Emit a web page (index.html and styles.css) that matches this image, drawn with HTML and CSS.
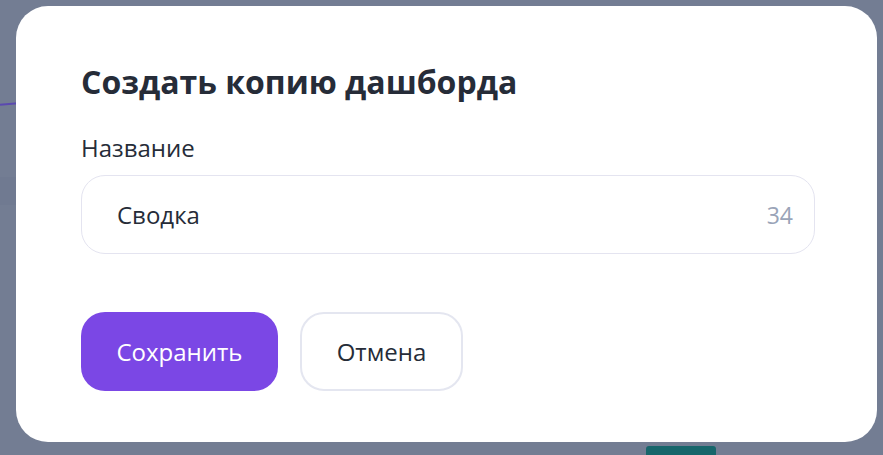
FILE: index.html
```html
<!DOCTYPE html>
<html lang="ru">
<head>
<meta charset="utf-8">
<link rel="stylesheet" href="styles.css">
</head>
<body>
<div class="backdrop">
  <div class="bg-line"></div>
  <div class="bg-band"></div>
  <div class="bg-tab"></div>
  <div class="modal">
    <h1 class="title">Создать копию дашборда</h1>
    <label class="label">Название</label>
    <div class="field">
      <span class="value">Сводка</span>
      <span class="counter">34</span>
    </div>
    <div class="actions">
      <button class="btn btn-primary">Сохранить</button>
      <button class="btn btn-secondary">Отмена</button>
    </div>
  </div>
</div>
</body>
</html>
```
FILE: styles.css
```css
html, body {
  margin: 0;
  padding: 0;
}
body {
  background: #737d93;
  font-family: "Open Sans", "Noto Sans", sans-serif;
  width: 883px;
  height: 455px;
  overflow: hidden;
}
.backdrop {
  position: relative;
  width: 883px;
  height: 455px;
  padding: 6px 0 0 16px;
  box-sizing: border-box;
}
.bg-line {
  position: absolute;
  left: 0;
  top: 103px;
  width: 18px;
  height: 2px;
  background: #5b49b0;
  transform: rotate(-4deg);
}
.bg-band {
  position: absolute;
  left: 0;
  top: 177px;
  width: 16px;
  height: 28px;
  background: #707a91;
}
.bg-tab {
  position: absolute;
  left: 646px;
  top: 446px;
  width: 70px;
  height: 12px;
  border-radius: 3px 3px 0 0;
  background: #17666b;
}
.modal {
  position: relative;
  width: 861px;
  height: 436px;
  box-sizing: border-box;
  background: #ffffff;
  border-radius: 32px;
  padding: 56px 65px 0 65px;
  display: flex;
  flex-direction: column;
}
.title {
  margin: 0;
  font-size: 32px;
  line-height: 40px;
  font-weight: 700;
  color: #262c38;
}
.label {
  margin-top: 31px;
  font-size: 24px;
  line-height: 30px;
  color: #262c38;
}
.field {
  margin-top: 12px;
  width: 734px;
  height: 79px;
  box-sizing: border-box;
  border: 1px solid #e4e4f0;
  border-radius: 24px;
  display: flex;
  align-items: center;
  justify-content: space-between;
  padding: 0 21px 0 35px;
}
.value {
  font-size: 24px;
  color: #262c38;
}
.counter {
  font-size: 23px;
  color: #9aa4b8;
}
.actions {
  margin-top: 58px;
  display: flex;
  gap: 22px;
}
.btn {
  font-family: inherit;
  height: 79px;
  border-radius: 24px;
  font-size: 24px;
  padding: 0;
  cursor: pointer;
}
.btn-primary {
  width: 197px;
  background: #7b47e5;
  color: #ffffff;
  border: none;
}
.btn-secondary {
  width: 163px;
  background: #ffffff;
  color: #262c38;
  border: 2px solid #e4e6f0;
}
```
